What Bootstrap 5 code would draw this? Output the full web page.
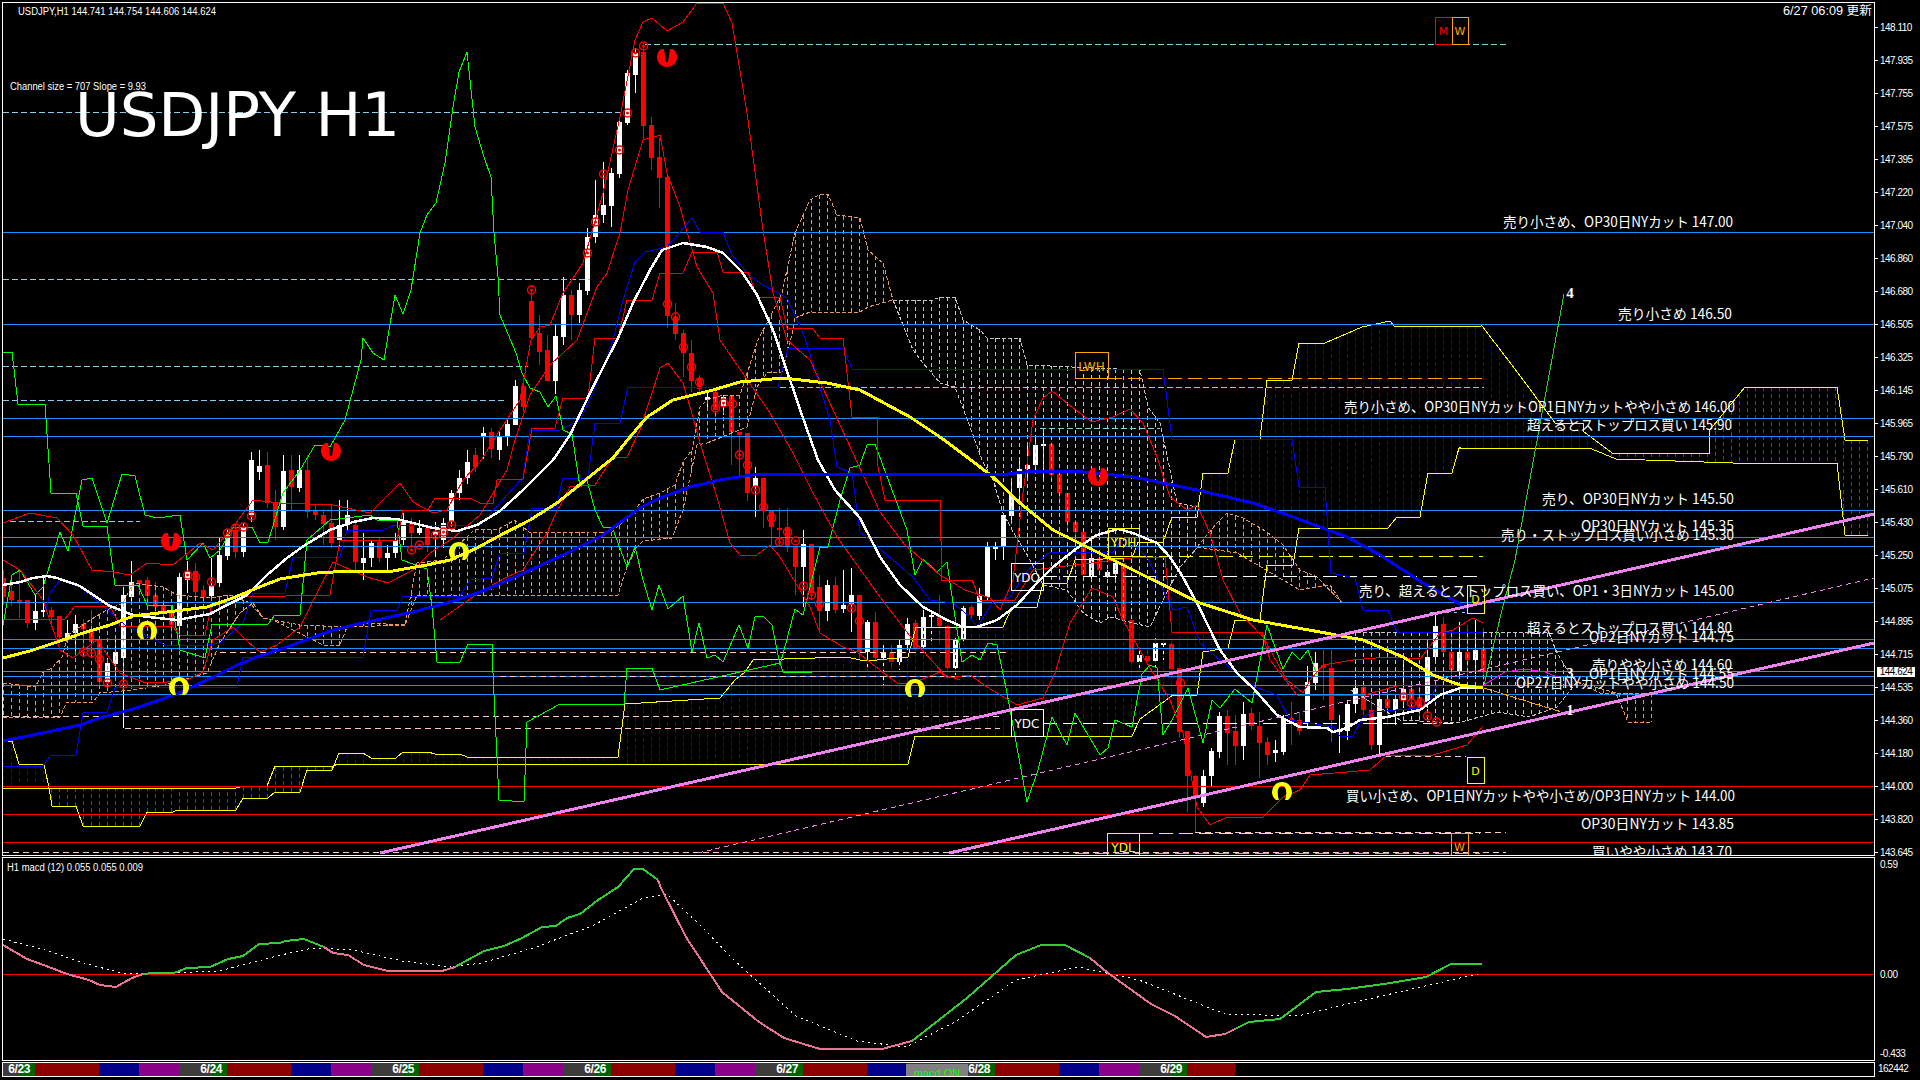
<!DOCTYPE html>
<html lang="ja">
<head>
  <meta charset="utf-8">
  <meta name="viewport" content="width=device-width, initial-scale=1">
  <title>USDJPY H1</title>
  <link href="https://cdn.jsdelivr.net/npm/bootstrap@5.3.3/dist/css/bootstrap.min.css" rel="stylesheet">
  <script src="https://cdn.jsdelivr.net/npm/bootstrap@5.3.3/dist/js/bootstrap.bundle.min.js"></script>
  <style>
    body { background: #000; color: #fff; font-family: "Liberation Sans", sans-serif; overflow: hidden; }
    .terminal { width: 1920px; height: 1080px; padding: 2px 0 0 2px; background: #000; }
    .pane { width: 1873px; border: 1px solid #fff; background: #000; }
    .pane svg { display: block; }
    .pane-main { height: 854px; }
    .pane-macd { height: 204px; margin-top: 1px; }
    .pane-time { height: 15px; margin-top: 1px; }
    .axis { width: 45px; font-size: 10px; letter-spacing: -.5px; line-height: 33px; position: relative; }
    .axis-main { height: 854px; padding-top: 9px; }
    .tick { height: 33px; padding-left: 5px; position: relative; }
    .tick::before { content: ""; position: absolute; left: 0; top: 16px; width: 3px; height: 1px; background: #fff; }
    .axis-macd { height: 204px; margin-top: 1px; line-height: 12px; padding: 2px 0 0 5px; }
    .axis-macd .zero { margin-top: 98px; }
    .axis-macd .low { margin-top: 67px; }
    .axis-time { height: 15px; margin-top: 1px; line-height: 13px; padding-left: 3px; }
    .price-tag { position: absolute; left: 2px; top: 665px; background: #fff; color: #000; width: 38px; height: 10px; line-height: 10px; text-align: center; font-size: 10px; }
    .seg { height: 13px; flex: none; }
    .seg-red { width: 64px; background: #8b0000; }
    .seg-blue { width: 40px; background: #00008b; }
    .seg-pur { width: 40px; background: #8b008b; }
    .seg-date { width: 48px; background: linear-gradient(90deg, #3c3c3c 32px, #006400 32px); color: #fff; text-align: right; padding-right: 5px;
      font: bold 12px/13px "Liberation Sans Narrow", "Liberation Sans", sans-serif; letter-spacing: -.4px; }
    .seg-first { width: 32px; background: linear-gradient(90deg, #3c3c3c 16px, #006400 16px); }
    .seg-end { width: 48px; background: #8b0000; }
    .macd-btn { position: absolute; left: 903px; top: 1px; width: 62px; height: 12px; background: #808080; color: #0f0;
      font: 11px/18px "Liberation Sans", sans-serif; text-align: center; overflow: hidden; }
    .time-track { position: relative; height: 13px; }
  </style>
</head>
<body>
<div class="terminal">
  <div class="d-flex">
    <div class="pane pane-main"><svg id="mainChart" width="1871" height="852" viewBox="3 3 1871 852"></svg></div>
    <div class="axis axis-main d-flex flex-column" id="priceAxis"></div>
  </div>
  <div class="d-flex">
    <div class="pane pane-macd"><svg id="macdChart" width="1871" height="202" viewBox="3 858 1871 202"></svg></div>
    <div class="axis axis-macd">
      <div>0.59</div>
      <div class="zero">0.00</div>
      <div class="low">-0.433</div>
    </div>
  </div>
  <div class="d-flex">
    <div class="pane pane-time"><div class="time-track d-flex" id="timeline"></div></div>
    <div class="axis axis-time">162442</div>
  </div>
</div>

<script>
  const NS = 'http://www.w3.org/2000/svg';
  const main = document.getElementById('mainChart');
  const macd = document.getElementById('macdChart');

  function el(parent, tag, attrs, text) {
    const node = document.createElementNS(NS, tag);
    for (const k in attrs) node.setAttribute(k, attrs[k]);
    if (text) node.textContent = text;
    parent.appendChild(node);
    return node;
  }
  function line(parent, p, color, width, dash) {
    let pts = '';
    for (let i = 0; i < p.length; i += 2) pts += p[i] + ',' + p[i + 1] + ' ';
    const a = { points: pts, fill: 'none', stroke: color, 'stroke-width': width || 1, 'shape-rendering': 'crispEdges' };
    if (dash) a['stroke-dasharray'] = dash;
    el(parent, 'polyline', a);
  }
  function at(p, x) {
    for (let i = 0; i < p.length - 2; i += 2) {
      if (x >= p[i] && x <= p[i + 2]) {
        return p[i + 2] === p[i] ? p[i + 1] : p[i + 1] + (p[i + 3] - p[i + 1]) * (x - p[i]) / (p[i + 2] - p[i]);
      }
    }
    return null;
  }
  // vertical dashed hatching between two boundaries, one line per bar
  function hatch(up, low, color) {
    for (let x = 3; x <= 1868; x += 8) {
      const a = at(up, x), b = at(low, x);
      if (a === null || b === null) continue;
      line(main, [x, a, x, b], typeof color === 'function' ? color(x) : color, 1, '4 3');
    }
  }
  function slice(p, a, b) {
    const out = [a, at(p, a)];
    for (let i = 0; i < p.length; i += 2) if (p[i] > a && p[i] < b) out.push(p[i], p[i + 1]);
    out.push(b, at(p, b));
    return out;
  }

  // price axis
  const prices = ['148.110','147.935','147.755','147.575','147.395','147.220','147.040','146.860','146.680','146.505','146.325','146.145','145.965','145.790','145.610','145.430','145.250','145.075','144.895','144.715','144.535','144.360','144.180','144.000','143.820','143.645'];
  const axis = document.getElementById('priceAxis');
  prices.forEach(p => {
    const t = document.createElement('div');
    t.className = 'tick';
    t.textContent = p;
    axis.appendChild(t);
  });
  const tag = document.createElement('div');
  tag.className = 'price-tag';
  tag.textContent = '144.624';
  axis.appendChild(tag);

  // candles: colour, body top, body bottom, high, low (x = 3 + 8 * index)
  const candles = [
    ['r',578,597,570,605],['r',591,600,580,606],['r',600,603,570,618],['r',600,623,600,628],['w',611,623,595,630],['w',610,612,577,617],
    ['r',610,617,607,623],['r',616,637,617,640],['w',633,637,620,643],['w',624,633,615,655],['r',624,629,619,650],['r',629,642,610,653],
    ['r',640,682,640,687],['w',663,682,658,688],['w',652,664,640,677],['w',595,658,587,728],['w',582,597,561,603],['r',580,584,580,590],
    ['r',580,596,577,603],['r',595,607,582,613],['r',606,612,600,617],['r',612,625,610,640],['w',577,626,573,640],['w',572,580,561,593],
    ['r',571,592,563,597],['r',590,597,585,603],['w',586,596,558,598],['w',555,583,537,587],['w',535,556,530,560],['r',530,552,525,558],
    ['w',527,552,523,557],['w',460,515,452,522],['w',466,472,450,480],['r',465,503,452,508],['r',503,527,490,540],['w',471,527,455,530],
    ['r',470,487,455,510],['w',470,488,455,492],['r',470,512,455,518],['r',511,515,505,520],['r',515,524,510,545],['r',523,543,505,548],
    ['w',525,540,500,547],['w',515,525,500,530],['r',525,562,523,570],['w',558,563,533,580],['w',543,558,540,567],['r',542,558,538,562],
    ['w',553,558,545,570],['w',540,553,533,558],['w',522,540,513,545],['r',523,533,518,548],['w',528,533,520,535],['r',528,545,525,552],
    ['w',532,535,522,557],['w',523,540,518,548],['w',493,522,490,527],['w',478,493,470,500],['w',462,478,450,484],['r',455,467,448,472],
    ['w',433,437,427,459],['r',432,449,428,458],['w',437,450,430,460],['w',424,437,420,446],['w',386,425,380,425],['r',386,407,382,412],
    ['r',301,338,290,338],['r',333,352,315,365],['r',350,381,335,381],['w',336,381,324,394],['w',295,337,277,345],['r',295,315,290,340],
    ['w',290,315,283,323],['w',237,291,228,295],['w',215,237,180,243],['w',205,215,162,223],['w',173,206,168,227],['w',122,174,118,178],
    ['w',73,123,70,125],['w',53,75,48,93],['r',52,126,43,140],['r',125,158,117,170],['r',157,178,138,208],['r',177,316,173,328],
    ['r',317,334,303,340],['r',333,353,330,377],['r',353,381,340,392],['r',378,389,375,395],['w',397,400,390,410],['r',392,410,390,417],
    ['w',397,407,395,415],['r',396,432,396,465],['r',432,435,432,477],['r',433,493,433,501],['w',478,487,467,517],['r',478,511,478,528],
    ['r',510,527,510,547],['r',528,530,508,547],['r',527,547,508,552],['r',547,567,547,595],['w',544,567,530,607],['r',544,593,544,600],
    ['r',587,611,575,630],['w',585,611,580,621],['r',585,610,577,613],['w',605,609,570,613],['w',595,605,568,632],['r',595,652,595,660],
    ['w',622,652,620,670],['r',622,658,612,664],['w',653,658,645,686],['r',653,662,645,670],['w',645,662,640,670],['w',624,645,618,650],
    ['r',623,648,620,650],['w',617,647,610,650],['w',615,617,610,643],['r',616,626,595,643],['r',626,668,625,670],['w',639,668,636,675],
    ['w',608,639,606,645],['r',607,615,605,620],['w',596,616,588,620],['w',547,597,542,600],['w',547,549,542,560],['w',515,547,513,560],
    ['w',495,516,480,520],['w',469,488,460,500],['w',465,469,445,480],['w',445,465,435,470],['w',444,446,428,480],['r',444,475,444,480],
    ['r',474,493,474,505],['r',493,522,493,530],['r',522,532,520,545],['r',532,575,532,580],['w',558,576,540,578],['r',558,570,555,575],
    ['w',572,576,570,578],['w',563,574,560,580],['r',563,620,563,625],['r',620,662,620,665],['w',655,662,650,672],['r',656,661,650,665],
    ['w',643,661,638,668],['w',643,645,640,660],['r',644,669,640,672],['r',668,732,665,738],['r',731,776,731,812],['r',776,798,775,833],
    ['w',776,803,770,807],['w',751,776,748,787],['w',716,752,712,758],['r',716,733,710,765],['r',731,746,715,765],['w',714,746,702,760],
    ['r',713,726,708,730],['r',726,743,712,778],['r',742,755,737,765],['w',750,753,740,762],['w',718,752,715,755],['r',718,722,702,745],
    ['r',720,731,712,735],['w',682,722,666,728],['w',663,683,652,690],['r',665,668,650,700],['r',668,720,650,742],['w',730,732,715,753],
    ['w',704,731,700,740],['w',688,704,680,713],['r',687,710,685,715],['r',710,745,700,750],['w',699,745,688,755],['r',699,708,688,725],
    ['w',699,710,695,725],['w',689,700,662,708],['r',689,699,683,710],['r',697,708,687,722],['w',657,702,640,708],['w',626,657,615,660],
    ['r',624,652,617,656],['r',652,670,630,674],['w',652,671,622,676],['r',652,660,625,675],['w',650,660,620,674],['r',649,672,628,680]
  ];
  candles.forEach((c, i) => {
    const x = 3 + 8 * i, col = c[0] === 'r' ? '#f00' : '#fff';
    el(main, 'rect', { x: x, y: c[3], width: 1, height: c[4] - c[3], fill: col, 'shape-rendering': 'crispEdges' });
    el(main, 'rect', { x: x - 2, y: c[1], width: 5, height: c[2] - c[1], fill: col, 'shape-rendering': 'crispEdges' });
  });

  // ichimoku-like clouds
  const kumoA = [3,741,12,741,19,764,44,764,49,788,52,806,76,806,83,826,140,826,147,812,173,812,177,810,236,810,243,798,268,798,275,792,300,792,307,770,332,770,339,753,363,753,371,758,396,758,403,752,428,752,435,754,460,754,467,757,618,757,625,704,720,698,735,680,745,672,753,660,847,657,860,660,877,660,908,657,916,627,1003,627,1012,607,1037,607,1043,583,1067,583,1075,560,1132,558,1138,542,1163,542,1172,517,1197,517,1203,473,1228,473,1235,439,1260,439,1267,380,1292,380,1299,343,1325,343,1362,327,1390,321,1395,327,1482,326,1518,373,1555,423,1583,423,1583,431,1612,453,1709,453,1709,431,1745,387,1837,387,1845,440,1868,440];
  const kumoB = [3,788,236,788,243,786,267,786,275,766,333,766,338,764,908,764,915,736,1132,736,1140,719,1173,695,1197,695,1203,652,1228,648,1235,620,1260,620,1267,565,1293,565,1299,528,1388,528,1397,517,1420,517,1428,473,1452,473,1459,448,1592,449,1616,459,1733,463,1837,463,1845,535,1868,535];
  hatch(kumoA, kumoB, x => (x < 49 || (x >= 338 && x < 1600)) ? '#0000ff' : '#f00');

  const orange = '#e8985a', pale = '#cfc2c6';
  const lobes = [
    [[3,683,35,687,38,682,43,672,52,668,62,657,68,635,90,620,107,610,123,603,133,583,148,585,163,587,177,595,200,597,217,597,230,595,250,603,263,618,273,620,300,625,347,627],
     [3,717,60,717,67,702,93,702,100,693,133,690,165,685,207,673,220,643,240,613,253,603,263,618,273,620,323,645,340,645,347,627], orange],
    [[347,627,367,623,405,625,417,563,443,560,475,529,497,530,515,520,530,533,590,532,612,532,635,510,643,499,660,493,675,485,683,462,692,450,700,407,707,400],
     [347,627,405,625,417,595,618,595,627,567,637,547,643,541,672,538,683,510,697,445,707,443], orange],
    [[707,400,720,396,740,395,758,340,770,317,782,293,795,233],[707,443,747,427,757,387,767,373,782,372,793,330,795,318], orange],
    [[795,233,810,200,820,194,828,194,837,215,860,218,868,250,883,263,893,300],[795,318,810,312,860,312,868,307,893,300], orange],
    [[893,300,933,300,940,297,955,297,963,320,980,330,987,338,1020,338,1027,365,1140,370,1148,407,1160,423,1163,437,1177,503,1197,507],
     [893,300,913,350,923,363,940,383,955,387,970,427,982,460,993,480,1003,513,1012,530,1030,560,1043,585,1067,590,1083,613,1100,623,1110,617,1133,623,1150,627,1163,600,1180,567,1197,548], pale],
    [[1197,547,1217,523,1227,513,1243,518,1267,532,1283,545,1293,560,1300,570,1317,577,1342,603],[1197,547,1237,553,1300,590,1330,585,1342,603], orange],
    [[1351,632,1549,633,1557,653,1569,673,1577,682],[1351,690,1400,720,1458,723,1498,712,1529,717,1557,707,1577,682], pale],
    [[1577,682,1600,693,1652,693],[1577,682,1616,693,1628,722,1652,722], orange]
  ];
  lobes.forEach(l => {
    hatch(l[0], l[1], l[2]);
    line(main, l[0], l[2], 1, '4 2');
    line(main, l[1], l[2], 1, '4 2');
  });
  line(main, kumoA, '#ff0', 1);
  line(main, kumoB, '#ff0', 1);

  // horizontal levels
  [232,324,418,436,510,537,546,602,639,648,676,685,694].forEach(y => line(main, [3,y,1874,y], '#1e90ff', 1));
  line(main, [3,671,1874,671], '#808080', 1);
  [786,814,842].forEach(y => line(main, [3,y,1874,y], '#f00', 1));
  [[3,620,112],[3,590,279],[3,528,366],[3,505,400],[645,1506,44],[645,1484,387],[1040,1160,428],[10,140,521]].forEach(d => line(main, [d[0],d[2],d[1],d[2]], '#87ceeb', 1, '6 3'));
  [[220,1010,652],[3,1000,716],[125,1000,728],[3,1506,852],[500,1000,676],[1195,1506,832],[1385,1466,756]].forEach(d => line(main, [d[0],d[2],d[1],d[2]], '#ffc8c8', 1, '6 4'));
  line(main, [1108,378,1483,378], '#ffa500', 1, '14 6');
  line(main, [1139,556,1483,556], '#ff0', 1, '14 6');
  line(main, [1043,576,1483,576], '#fff', 1, '14 6');
  line(main, [1043,723,1453,723], '#fff', 1, '14 6');
  line(main, [1139,833,1480,833], '#ff0', 1, '14 6');
  line(main, [1075,853,1480,853], '#ffa500', 1, '14 6');
  line(main, [1430,612,1465,612], '#87ceeb', 1, '3 5');

  // thin step and band lines
  line(main, [3,766,43,766,50,756,76,755,83,713,107,712,115,688,140,687,237,687,243,657,363,657,371,611,397,610,403,596,460,596,470,580,492,578,500,553,524,553,532,508,556,508,563,478,588,478,595,423,620,423,628,387,778,387,788,348,843,348,852,369,1163,369,1172,439,1292,439,1299,487,1325,487,1331,573,1355,578,1363,610,1388,610,1397,632,1483,632], '#0000ff', 1);
  line(main, [45,613,50,593,60,580,80,587,100,603,125,625,165,645,207,645,220,643,243,623,253,593,285,593,293,557,340,557,347,530,383,530,395,525,480,525,500,503,523,477,530,430,560,430,580,420,593,393,607,357,613,340,623,300,635,262,645,252,667,247,692,218,700,232,723,232,732,255,747,273,763,285,787,298,797,320,805,338,830,420,837,467,852,473,860,532,913,577,930,600,953,603,970,617,977,627,993,602,1010,597,1028,570,1050,552,1113,552,1123,537,1147,557,1173,610,1187,607,1200,643,1220,660,1255,687,1277,695,1290,720,1333,727,1340,736,1353,736,1363,717,1373,712,1420,708,1430,700,1437,685,1483,685], '#0000ff', 1);
  line(main, [3,352,12,352,18,404,45,404,51,493,76,493,83,526,107,526,115,585,138,585,147,605,172,605,180,650,205,658,212,624,268,624,275,615,300,615,307,540,330,520,370,515,377,520,397,520,402,560,427,569,432,607,437,662,460,662,468,644,492,644,493,673,499,800,524,802,527,722,560,704,624,704,627,668,652,668,660,690,780,663,783,672,812,672], '#0f0', 1);
  line(main, [3,625,12,575,20,570,35,595,43,587,60,532,68,551,82,480,92,478,107,523,122,474,135,476,145,515,157,518,180,515,187,560,203,543,210,558,220,550,233,527,252,527,260,543,268,542,283,493,300,470,315,445,330,447,345,420,361,360,363,338,373,353,384,360,395,295,403,314,411,290,420,233,427,215,436,203,445,163,453,107,459,72,467,52,475,127,484,157,491,177,494,233,498,277,500,315,516,353,522,373,530,388,540,392,548,407,556,396,563,430,572,434,580,487,587,480,595,510,603,527,612,527,627,567,635,547,643,580,652,610,659,585,668,609,683,596,692,652,699,623,707,658,715,655,723,662,739,625,748,648,755,617,763,616,772,625,780,665,795,609,803,615,820,547,828,547,840,500,850,468,860,465,867,445,875,444,892,490,907,530,915,575,923,559,937,572,947,562,955,617,962,662,972,655,980,660,988,643,997,645,1007,693,1027,802,1038,770,1052,717,1067,745,1075,713,1100,755,1108,748,1115,720,1132,727,1142,674,1150,665,1157,668,1163,735,1172,720,1188,688,1203,743,1212,700,1220,708,1235,689,1252,703,1267,625,1283,669,1292,652,1300,660,1308,650,1317,675], '#0f0', 1);
  line(main, [1484,685,1502,610,1515,560,1564,294], '#32cd32', 1);
  line(main, [3,523,30,513,57,518,73,535,92,570,113,572,130,575,147,563,173,565,200,543,213,550,233,527,253,500,280,503,333,505,370,513,400,483,413,502,433,513,447,510,463,480,480,462,500,430,520,400,531,340,540,327,550,325,563,293,583,263,603,193,620,117,635,40,643,22,652,18,667,31,683,22,697,3,723,3,732,23,747,113,763,230,773,293,787,340,810,360,847,440,880,512,905,545,940,575,965,590,990,598,1000,610,1013,580,1023,493,1033,420,1043,398,1052,391,1073,408,1092,422,1113,417,1130,409,1143,423,1157,457,1170,497,1187,510,1197,505,1210,533,1223,580,1240,613,1263,637,1287,680,1303,693,1310,680,1323,665,1353,660,1387,657,1420,659,1440,633,1453,630,1473,618,1483,623], '#f00', 1);
  line(main, [3,560,20,570,43,600,60,650,73,658,97,640,120,673,143,682,167,682,187,680,203,672,213,640,233,627,248,642,260,652,277,645,300,627,320,587,333,562,367,577,388,583,413,570,430,553,453,538,480,515,507,470,515,440,530,395,550,365,577,340,597,287,607,273,620,233,628,190,643,140,660,135,667,173,680,207,697,267,713,293,720,340,770,413,793,453,813,493,837,537,880,597,913,640,945,675,960,680], '#f00', 1);
  line(main, [440,620,480,592,507,577,523,570,547,533,555,515,570,487,595,485,613,457,627,457,640,430,660,368,668,363,683,383,693,417,700,443,717,497,730,543,740,555,757,555,770,545,780,557,810,607,820,633,843,647,857,652,880,670,897,683,913,683,940,672,947,678,970,675,987,687,1017,705,1043,698,1055,673,1070,623,1092,588,1113,597,1123,620,1147,663,1170,700,1183,733,1197,807,1210,825,1227,817,1263,817,1283,797,1300,790,1310,775,1347,772,1370,770,1387,755,1433,755,1467,745,1483,726], '#f00', 1);
  line(main, [3,619,65,619,75,606,110,606,120,626,172,626,180,635,205,635,212,603,235,603,243,597,330,595,340,540,397,540,403,510,428,510,435,498,470,498,480,503,493,503,497,480,523,479,532,428,555,428,563,398,588,398,595,338,618,338,627,300,652,300,660,273,683,273,692,252,717,252,723,272,748,272,757,297,780,297,787,328,813,329,820,338,843,338,852,417,877,417,878,467,885,500,940,500,942,580,972,580,980,600,1015,600,1033,570,1140,557,1165,557,1172,632,1262,632,1270,660,1297,695,1365,695,1400,685,1483,685], '#f00', 1);

  // moving averages
  line(main, [3,585,20,582,33,578,47,576,57,578,80,586,93,595,110,606,133,615,157,618,177,620,193,617,210,614,227,605,247,595,267,575,287,558,305,545,330,530,353,522,373,518,397,519,413,523,433,528,457,531,477,525,500,511,523,490,553,460,570,435,590,393,618,338,633,303,650,270,662,250,683,243,707,247,723,253,742,272,757,295,773,330,790,380,803,418,818,460,835,490,860,518,880,557,900,585,923,607,947,620,963,627,977,627,997,620,1017,605,1037,583,1053,567,1077,548,1097,535,1118,529,1133,533,1157,543,1170,557,1180,572,1197,603,1220,650,1237,673,1253,688,1277,715,1300,727,1327,728,1333,732,1347,728,1360,720,1387,717,1420,710,1440,695,1460,688,1483,687], '#fff', 2.5);
  line(main, [3,658,30,651,57,642,83,633,110,625,133,616,167,612,207,607,233,598,257,588,280,579,317,573,350,571,393,571,427,565,450,560,477,548,497,537,530,520,557,503,583,482,613,458,630,437,647,417,673,400,713,390,740,382,783,378,827,383,860,390,910,417,940,437,967,457,993,477,1020,503,1053,530,1093,550,1143,575,1200,603,1253,620,1320,632,1363,640,1403,657,1433,675,1460,685,1483,688], '#ff0', 3);
  line(main, [1484,688,1529,702,1565,713], '#ffa500', 1, '8 1');
  line(main, [3,741,33,735,80,725,100,718,133,709,177,694,207,680,233,667,257,657,287,647,333,630,367,622,413,612,447,603,480,592,513,578,563,555,603,535,640,508,660,498,690,487,720,480,757,474,880,474,1000,475,1033,471,1083,472,1133,477,1197,490,1253,503,1293,517,1347,537,1380,555,1423,583,1467,608], '#0000ff', 3);
  line(main, [1484,685,1505,672,1525,669,1545,672,1557,677], '#f0f', 1);

  // trend channel
  line(main, [380,853,1874,514], '#ee82ee', 3);
  line(main, [949,853,1874,643], '#ee82ee', 3);
  line(main, [698,853,1874,578], '#ee82ee', 1, '5 4');

  // label boxes
  const boxes = [
    [1435,17,17,27,'#f00','M'],[1452,17,16,27,'#ffa500','W'],[1075,352,33,26,'#ffa500','LWH'],[1108,528,31,28,'#ff0','YDH'],
    [1011,563,32,27,'#fff','YDO'],[1011,709,32,27,'#fff','YDC'],[1107,833,32,24,'#ff0','YDL'],[1467,585,17,28,'#ff0','D'],
    [1467,757,17,26,'#ff0','D'],[1451,833,17,24,'#ffa500','W']
  ];
  boxes.forEach(b => {
    el(main, 'rect', { x: b[0] + .5, y: b[1] + .5, width: b[2], height: b[3], fill: 'none', stroke: b[4], 'shape-rendering': 'crispEdges' });
    const single = b[5].length === 1;
    el(main, 'text', { x: b[0] + b[2] / 2, y: single ? b[1] + 18 : b[1] + 19, 'text-anchor': 'middle', fill: b[4],
      'font-family': '"DejaVu Sans", sans-serif', 'font-size': single ? 11 : 12 }, b[5]);
  });

  // swing markers
  [[83,652],[91,653],[99,659],[107,683],[123,684],[187,575],[195,577],[211,582],[227,533],[235,528],[243,527],[251,516],[411,550],[419,545],[435,535],[443,532],[451,525],[531,290],[587,253],[595,222],[603,174],[619,150],[627,113],[635,53],[643,46],[667,304],[675,317],[683,347],[691,367],[699,382],[715,408],[723,403],[732,404],[739,455],[747,465],[755,490],[763,507],[771,518],[779,542],[787,532],[795,541],[803,586],[811,595],[819,604],[851,608],[859,621],[1180,683],[1403,697],[1411,703],[1420,703],[1427,716],[1436,722]].forEach(m => {
    el(main, 'circle', { cx: m[0] + .5, cy: m[1], r: 4, fill: 'none', stroke: '#f00', 'stroke-width': 1.5 });
    el(main, 'circle', { cx: m[0] + .5, cy: m[1], r: 1.5, fill: '#f00' });
  });
  // horseshoe signs: red opens upward with a narrow wedge, yellow opens downward
  [[667,58],[171,542],[331,452],[1098,477]].forEach(s => {
    el(main, 'path', { transform: `translate(${s[0]},${s[1]})`, d: 'M-3,-9 L-6,-9 A10,10 0 1 0 6,-9 L3,-9 L1,4 L-1,4 Z', fill: '#f00' });
  });
  [[179,686],[147,630],[459,551],[915,688],[1282,791]].forEach(s => {
    el(main, 'path', { transform: `translate(${s[0]},${s[1]})`, d: 'M-3,9 L-6,9 A10,10 0 1 1 6,9 L3,9 C5,3 5,-5 0,-5 C-5,-5 -5,3 -3,9 Z', fill: '#ff0' });
  });

  // level comments: left, right, baseline, text
  const notes = [
    [1503,1733,227,'売り小さめ、OP30日NYカット 147.00'],
    [1618,1732,319,'売り小さめ 146.50'],
    [1344,1735,412,'売り小さめ、OP30日NYカットOP1日NYカットやや小さめ 146.00'],
    [1527,1732,430,'超えるとストップロス買い 145.90'],
    [1542,1734,504,'売り、OP30日NYカット 145.50'],
    [1581,1734,531,'OP30日NYカット 145.35'],
    [1501,1734,540,'売り・ストップロス買い小さめ 145.30'],
    [1359,1734,596,'売り、超えるとストップロス買い、OP1・3日NYカット 145.00'],
    [1527,1732,633,'超えるとストップロス買い 144.80'],
    [1589,1734,642,'OP2日NYカット 144.75'],
    [1592,1732,670,'売りやや小さめ 144.60'],
    [1589,1734,679,'OP1日NYカット 144.55'],
    [1516,1734,688,'OP27日NYカットやや小さめ 144.50'],
    [1346,1735,801,'買い小さめ、OP1日NYカットやや小さめ/OP3日NYカット 144.00'],
    [1581,1734,829,'OP30日NYカット 143.85'],
    [1592,1732,857,'買いやや小さめ 143.70']
  ];
  notes.forEach(n => {
    el(main, 'text', { x: n[0], y: n[2], textLength: n[1] - n[0], lengthAdjust: 'spacingAndGlyphs', fill: '#fff',
      'font-family': '"Noto Sans CJK JP", sans-serif', 'font-size': 14 }, n[3]);
  });

  function small(svg, x, y, w, s, size) {
    el(svg, 'text', { x: x, y: y, textLength: w, lengthAdjust: 'spacingAndGlyphs', fill: '#fff',
      'font-family': '"Liberation Sans", "Noto Sans CJK JP", sans-serif', 'font-size': size || 10 }, s);
  }
  small(main, 18, 15, 198, 'USDJPY,H1  144.741 144.754 144.606 144.624');
  small(main, 10, 90, 136, 'Channel size = 707 Slope = 9.93');
  small(main, 1783, 15, 89, '6/27 06:09 更新', 12);
  el(main, 'text', { x: 75, y: 136, fill: '#fff', 'font-family': '"DejaVu Sans", sans-serif', 'font-size': 61 }, 'USDJPY H1');
  [[1570,298,'4',15],[1570,678,'3',14],[1570,715,'1',14]].forEach(t => {
    el(main, 'text', { x: t[0], y: t[1], 'text-anchor': 'middle', fill: '#fff', 'font-family': '"Liberation Serif", serif', 'font-weight': 'bold', 'font-size': t[3] }, t[2]);
  });

  // macd pane
  small(macd, 7, 871, 136, 'H1  macd (12) 0.055 0.055 0.009');
  line(macd, [3,974,1874,974], '#f00', 1);
  const signal = [3,939,45,950,80,962,125,974,174,973,219,971,281,955,313,948,353,950,402,961,451,967,482,963,536,947,594,925,643,898,667,894,700,925,735,961,796,1016,857,1041,906,1047,955,1022,1016,980,1078,967,1139,980,1225,1014,1298,1016,1347,1004,1482,973];
  line(macd, signal, '#fff', 1, '2 4');
  const macdLine = [3,945,27,959,49,967,67,974,89,980,100,985,116,987,132,978,143,974,154,973,174,973,187,968,210,967,228,959,243,956,259,944,279,943,286,941,304,939,324,947,333,953,348,955,364,965,388,971,442,971,455,967,484,951,504,946,522,938,542,927,556,926,567,918,580,914,598,900,618,887,634,869,643,869,658,880,661,888,686,937,722,992,759,1022,784,1038,820,1049,882,1049,912,1041,967,998,1016,955,1041,945,1065,945,1090,958,1108,973,1151,1004,1175,1016,1206,1037,1225,1034,1249,1022,1280,1019,1316,992,1347,989,1384,984,1426,977,1451,964,1482,964];
  [[3,143,'#e8729a'],[143,324,'#32cd32'],[324,455,'#e8729a'],[455,658,'#32cd32'],[658,912,'#e8729a'],[912,1090,'#32cd32'],[1090,1235,'#e8729a'],[1235,1482,'#32cd32']].forEach(r => {
    line(macd, slice(macdLine, r[0], r[1]), r[2], 2);
  });

  // session strip along the bottom
  const timeline = document.getElementById('timeline');
  function seg(cls, text) {
    const d = document.createElement('div');
    d.className = 'seg ' + cls;
    if (text) d.textContent = text;
    timeline.appendChild(d);
  }
  seg('seg-date seg-first', '6/23');
  ['6/24','6/25','6/26','6/27','6/28','6/29'].forEach(day => {
    seg('seg-red'); seg('seg-blue'); seg('seg-pur');
    seg('seg-date', day);
  });
  seg('seg-end');
  const btn = document.createElement('div');
  btn.className = 'macd-btn';
  btn.textContent = 'macd ON';
  timeline.appendChild(btn);
</script>
</body>
</html>
